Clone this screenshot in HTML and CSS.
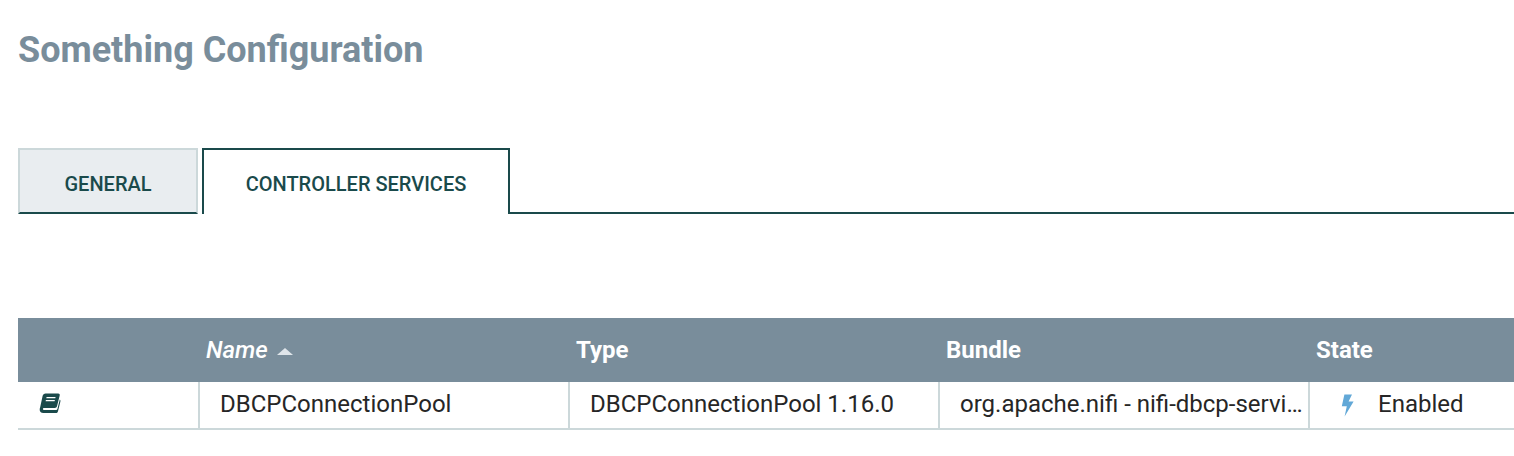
FILE: index.html
```html
<!DOCTYPE html>
<html lang="en">
<head>
    <meta charset="UTF-8">
    <meta name="viewport" content="width=device-width, initial-scale=1.0">
    <link rel="stylesheet" href="styles.css">
    <title>Something Configuration</title>
</head>
<body>
    <div class="settings-header">Something Configuration</div>

    <div class="tab-bar">
        <div class="tab">General</div>
        <div class="tab selected">Controller Services</div>
        <div class="tab-rest"></div>
    </div>

    <div class="grid">
        <div class="grid-row grid-header">
            <div class="cell col-more"></div>
            <div class="cell col-name sorted">Name <span class="sort-arrow"></span></div>
            <div class="cell col-type">Type</div>
            <div class="cell col-bundle">Bundle</div>
            <div class="cell col-state">State</div>
        </div>
        <div class="grid-row grid-data">
            <div class="cell col-more">
                <svg class="book-icon" width="22" height="21" viewBox="0 0 22 21">
                    <path fill="#1a4a4b" d="M6.6 0.5H19.2C20.4 0.5 21 1.4 20.7 2.5L18 13.2C17.6 14.4 17 14.9 15.8 14.9H5.4C4.2 14.9 3.8 15.3 3.9 16C4 16.7 4.5 17 5.4 17H17.2C17.8 17 18.2 16.6 18.4 16.1L20.8 6.6C21.4 7 21.6 7.7 21.4 8.4L19 18.2C18.7 19.4 17.9 20.1 16.8 20.1H4.4C2 20.1 0.4 18.5 0.7 16.2C0.8 15.6 0.9 15.2 1.1 14.6L3.6 3C4 1.4 5 0.5 6.6 0.5Z"/>
                    <path fill="#fff" d="M7.6 4H16.6L16.3 5.3H7.3ZM6.9 7H15.9L15.6 8.3H6.6Z"/>
                </svg>
            </div>
            <div class="cell col-name">DBCPConnectionPool</div>
            <div class="cell col-type">DBCPConnectionPool 1.16.0</div>
            <div class="cell col-bundle">org.apache.nifi - nifi-dbcp-service-nar</div>
            <div class="cell col-state">
                <svg class="bolt-icon" width="13" height="23" viewBox="0 0 13 23">
                    <path fill="#62a8d7" d="M3.4 0.5H11L7.6 7.6H12.6L3.6 22.5L5.8 12.2H0.8Z"/>
                </svg>
                <span class="state-label">Enabled</span>
            </div>
        </div>
    </div>
</body>
</html>
```

FILE: styles.css
```css
body {
    margin: 0;
    height: 456px;
    overflow: hidden;
    background-color: #fff;
    font-family: 'Roboto', sans-serif;
}

.settings-header {
    padding: 28px 0 0 18px;
    height: 44px;
    line-height: 44px;
    font-size: 36px;
    font-weight: 700;
    color: #798d9b;
}

/* tabs */
.tab-bar {
    display: flex;
    margin: 76px 0 0 18px;
    height: 66px;
}

.tab {
    box-sizing: border-box;
    width: 180px;
    height: 66px;
    line-height: 69px;
    text-align: center;
    text-transform: uppercase;
    font-size: 20px;
    font-weight: 500;
    color: #1a4a4b;
    background-color: #e9edf0;
    border: 2px solid #ccd8da;
    border-bottom: 2px solid #1a4a4b;
}

.tab.selected {
    width: 308px;
    margin-left: 4px;
    background-color: #fff;
    border: 2px solid #1a4a4b;
    border-bottom: none;
}

.tab-rest {
    flex: 1;
    border-bottom: 2px solid #1a4a4b;
}

/* table */
.grid {
    margin: 104px 0 0 18px;
}

.grid-row {
    display: flex;
}

.grid-header {
    height: 64px;
    background-color: #798d9b;
    color: #fff;
    font-size: 24px;
    font-weight: 700;
    line-height: 64px;
}

.grid-data {
    box-sizing: border-box;
    height: 48px;
    border-bottom: 2px solid #ccd8da;
    color: #262626;
    font-size: 24px;
    line-height: 45px;
}

.cell {
    box-sizing: border-box;
    overflow: hidden;
    white-space: nowrap;
    text-overflow: ellipsis;
}

.grid-header .cell {
    padding-left: 8px;
}

.grid-data .cell {
    padding-left: 20px;
    border-right: 2px solid #ccd8da;
}

.col-more {
    width: 180px;
}

.grid-data .col-more {
    width: 182px;
    padding-left: 21px;
}

.col-name,
.col-type,
.col-bundle {
    width: 370px;
}

.col-state {
    flex: 1;
}

.grid-data .col-state {
    display: flex;
    align-items: flex-start;
    border-right: none;
    padding-left: 31px;
}

.sorted {
    font-style: italic;
    font-weight: 500;
}

.sort-arrow {
    display: inline-block;
    margin-left: 3px;
    vertical-align: 3px;
    border-left: 8px solid transparent;
    border-right: 8px solid transparent;
    border-bottom: 7px solid #dfe5ea;
}

.book-icon {
    display: block;
    margin-top: 11px;
}

.bolt-icon {
    display: block;
    margin: 12px 24px 0 0;
}
```
